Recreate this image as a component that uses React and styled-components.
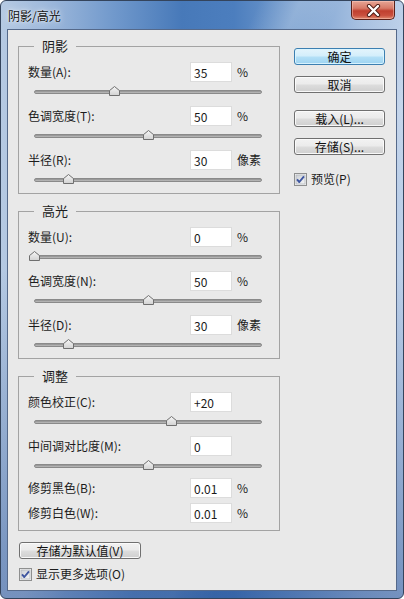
import React from 'react';
import styled, { createGlobalStyle } from 'styled-components';

const UI_FONT = `"Noto Sans CJK SC", "Noto Sans", sans-serif`;

const GlobalStyle = createGlobalStyle`
  html, body { margin: 0; padding: 0; background: #ffffff; }
  body { font-family: ${UI_FONT}; }
`;

const Window = styled.div`
  width: 404px;
  height: 599px;
  box-sizing: border-box;
  display: flex;
  flex-direction: column;
  padding: 0 6px 7px;
  border: 1px solid #34445c;
  border-radius: 6px;
  overflow: hidden;
  background:
    linear-gradient(180deg, rgba(255,255,255,0) 0, rgba(255,255,255,0) 45%, rgba(30,70,140,0.45) 100%),
    linear-gradient(115deg, rgba(255,255,255,0) 38%, rgba(255,255,255,0.2) 44%, rgba(255,255,255,0) 50%, rgba(255,255,255,0) 60%, rgba(255,255,255,0.14) 66%, rgba(255,255,255,0) 72%),
    linear-gradient(90deg, #b6cae3 0%, #9db8db 12%, #7199cc 28%, #4779b9 45%, #4c7ebe 58%, #7ca2d1 75%, #a9c2e2 90%, #bdd0e9 100%);
`;

const TitleBar = styled.div`
  height: 28px;
  display: flex;
  align-items: flex-start;
  justify-content: space-between;
`;

const Title = styled.div`
  margin: 7px 0 0 1px;
  font-size: 12px;
  line-height: 16px;
  color: #111;
  text-shadow: 0 0 6px rgba(255,255,255,0.9), 0 0 2px rgba(255,255,255,0.8);
`;

const CloseButton = styled.div`
  width: 44px;
  height: 19px;
  margin-right: 2px;
  box-sizing: border-box;
  display: flex;
  align-items: center;
  justify-content: center;
  border: 1px solid #5a2018;
  border-top: none;
  border-radius: 0 0 5px 5px;
  box-shadow: inset 0 0 0 1px rgba(255,210,200,0.45);
  background: linear-gradient(180deg, #e6a595 0%, #d77a68 40%, #c0402f 55%, #c9503e 80%, #e08a70 100%);
`;

const Client = styled.div`
  flex: 1;
  display: flex;
  border: 1px solid #55698a;
  background: #e9e9e9;
  font-size: 12px;
  color: #1c1c1c;
`;

const LeftCol = styled.div`
  width: 262px;
  padding: 16px 0 0 10px;
  display: flex;
  flex-direction: column;
`;

const RightCol = styled.div`
  width: 91px;
  margin-left: 14px;
  padding-top: 18px;
  display: flex;
  flex-direction: column;
`;

const Group = styled.section`
  border: 1px solid #a3a3a3;
  padding: 0 16px ${p => p.$padBottom || 0}px 9px;
  margin-top: ${p => p.$gap || 0}px;
`;

const Legend = styled.div`
  width: fit-content;
  margin: -9px 0 8px 6px;
  padding: 0 8px;
  background: #e9e9e9;
  line-height: 16px;
  font-size: 13px;
  color: #1c1c1c;
`;

const Field = styled.div`
  display: flex;
  align-items: center;
  height: 20px;
  margin-top: ${p => p.$gap || 0}px;
`;

const Label = styled.div`
  flex: 1;
  line-height: 16px;
`;

const ValueBox = styled.input`
  width: 42px;
  height: 20px;
  box-sizing: border-box;
  margin: 0;
  padding: 0 3px;
  border: 1px solid #dcdcdc;
  background: #ffffff;
  font-family: ${UI_FONT};
  font-size: 12px;
  line-height: 18px;
  color: #1a1a1a;
  outline: none;
`;

const Unit = styled.div`
  width: 26px;
  margin-left: 5px;
  line-height: 16px;
`;

const SliderWrap = styled.div`
  position: relative;
  box-sizing: border-box;
  width: 228px;
  height: ${p => p.$h || 24}px;
  margin-left: 6px;
  padding-top: 8px;
`;

const Track = styled.div`
  height: 4px;
  box-sizing: border-box;
  border: 1px solid #8a8a8a;
  border-radius: 2px;
  background: linear-gradient(180deg, #8f8f8f 0%, #a9a9a9 60%, #c2c2c2 100%);
`;

const Thumb = styled.svg`
  position: absolute;
  top: 4px;
  width: 11px;
  height: 10px;
  margin-left: -5px;
`;

const Button = styled.div`
  height: 17px;
  box-sizing: border-box;
  width: ${p => p.$w || 91}px;
  margin-top: ${p => p.$gap || 0}px;
  margin-left: ${p => p.$indent || 0}px;
  display: flex;
  align-items: center;
  justify-content: center;
  border: 1px solid ${p => (p.$primary ? '#3c7fb1' : '#707070')};
  border-radius: 3px;
  box-shadow: inset 0 0 0 1px ${p => (p.$primary ? 'rgba(220,245,255,0.9)' : 'rgba(252,252,252,0.9)')};
  background: ${p =>
    p.$primary
      ? 'linear-gradient(180deg, #e3f4fc 0%, #d3eefb 48%, #b4e0f7 52%, #9dd3f1 100%)'
      : 'linear-gradient(180deg, #f2f2f2 0%, #ebebeb 48%, #dddddd 52%, #cfcfcf 100%)'};
  font-size: 12px;
  line-height: 15px;
  color: #111;
`;

const CheckRow = styled.div`
  display: flex;
  align-items: center;
  gap: 4px;
  height: 16px;
  margin-top: ${p => p.$gap || 0}px;
  margin-left: ${p => p.$indent || 0}px;
  line-height: 16px;
`;

const CheckBox = styled.svg`
  width: 13px;
  height: 13px;
  flex-shrink: 0;
`;

function Check() {
  return (
    <CheckBox viewBox="0 0 13 13">
      <defs>
        <linearGradient id="cbfill" x1="0" y1="0" x2="1" y2="1">
          <stop offset="0" stopColor="#cbcfd5" />
          <stop offset="1" stopColor="#f6f6f6" />
        </linearGradient>
      </defs>
      <rect x="0.5" y="0.5" width="12" height="12" fill="#f4f4f4" stroke="#8e8f8f" />
      <rect x="2" y="2" width="9" height="9" fill="url(#cbfill)" stroke="#b4b8bd" strokeWidth="0.8" />
      <path d="M3 6.4 L5.3 9 L10 3.4" fill="none" stroke="#3e56a0" strokeWidth="1.9" strokeLinejoin="round" />
    </CheckBox>
  );
}

function Slider({ pct, h }) {
  return (
    <SliderWrap $h={h}>
      <Track />
      <Thumb viewBox="0 0 11 10" style={{ left: `${pct}%` }}>
        <defs>
          <linearGradient id="thumbfill" x1="0" y1="0" x2="0" y2="1">
            <stop offset="0" stopColor="#f6f6f6" />
            <stop offset="1" stopColor="#d2d2d2" />
          </linearGradient>
        </defs>
        <polygon points="5.5,0.5 10.5,4.6 10.5,9.5 0.5,9.5 0.5,4.6" fill="url(#thumbfill)" stroke="#6f6f6f" />
      </Thumb>
    </SliderWrap>
  );
}

function Row({ label, value, unit, gap }) {
  return (
    <Field $gap={gap}>
      <Label>{label}</Label>
      <ValueBox readOnly value={value} />
      <Unit>{unit}</Unit>
    </Field>
  );
}

export default function App() {
  return (
    <>
      <GlobalStyle />
      <Window>
        <TitleBar>
          <Title>阴影/高光</Title>
          <CloseButton>
            <svg width="15" height="13" viewBox="0 0 15 13">
              <path d="M3 2 L12 11 M12 2 L3 11" stroke="#4a1a14" strokeWidth="4.2" strokeLinecap="round" />
              <path d="M3 2 L12 11 M12 2 L3 11" stroke="#ffffff" strokeWidth="2.4" strokeLinecap="round" />
            </svg>
          </CloseButton>
        </TitleBar>
        <Client>
          <LeftCol>
            <Group>
              <Legend>阴影</Legend>
              <Row label="数量(A):" value="35" unit="%" />
              <Slider pct={35} />
              <Row label="色调宽度(T):" value="50" unit="%" />
              <Slider pct={50} />
              <Row label="半径(R):" value="30" unit="像素" />
              <Slider pct={15} h={23} />
            </Group>

            <Group $gap={17}>
              <Legend>高光</Legend>
              <Row label="数量(U):" value="0" unit="%" />
              <Slider pct={0} />
              <Row label="色调宽度(N):" value="50" unit="%" />
              <Slider pct={50} />
              <Row label="半径(D):" value="30" unit="像素" />
              <Slider pct={15} h={23} />
            </Group>

            <Group $gap={17} $padBottom={7}>
              <Legend>调整</Legend>
              <Row label="颜色校正(C):" value="+20" unit="" />
              <Slider pct={60} />
              <Row label="中间调对比度(M):" value="0" unit="" />
              <Slider pct={50} h={22} />
              <Row label="修剪黑色(B):" value="0.01" unit="%" />
              <Row label="修剪白色(W):" value="0.01" unit="%" gap={5} />
            </Group>

            <Button $w={122} $gap={11} $indent={1}>存储为默认值(V)</Button>
            <CheckRow $gap={7} $indent={1}>
              <Check />
              <span>显示更多选项(O)</span>
            </CheckRow>
          </LeftCol>

          <RightCol>
            <Button $primary>确定</Button>
            <Button $gap={11}>取消</Button>
            <Button $gap={17}>载入(L)...</Button>
            <Button $gap={11}>存储(S)...</Button>
            <CheckRow $gap={16}>
              <Check />
              <span>预览(P)</span>
            </CheckRow>
          </RightCol>
        </Client>
      </Window>
    </>
  );
}
